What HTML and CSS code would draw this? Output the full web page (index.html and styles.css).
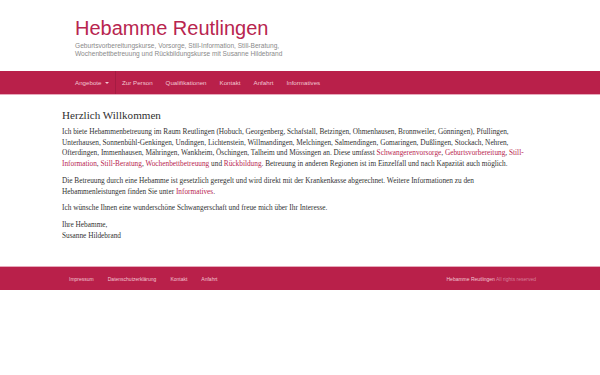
FILE: index.html
```html
<!DOCTYPE html>
<html lang="de">
<head>
<meta charset="utf-8">
<title>Hebamme Reutlingen</title>
<link rel="stylesheet" href="styles.css">
</head>
<body>
<header class="site-header">
  <div class="container header-inner">
    <h1 class="site-title">Hebamme Reutlingen</h1>
    <p class="site-desc">Geburtsvorbereitungskurse, Vorsorge, Still-Information, Still-Beratung,<br>Wochenbettbetreuung und Rückbildungskurse mit Susanne Hildebrand</p>
  </div>
</header>
<nav class="navbar">
  <div class="container nav-inner">
    <a class="nav-item dropdown" href="#">Angebote <span class="caret"></span></a>
    <a class="nav-item" href="#">Zur Person</a>
    <a class="nav-item" href="#">Qualifikationen</a>
    <a class="nav-item" href="#">Kontakt</a>
    <a class="nav-item" href="#">Anfahrt</a>
    <a class="nav-item" href="#">Informatives</a>
  </div>
</nav>
<main class="container content">
  <h2 class="page-title">Herzlich Willkommen</h2>
  <p>Ich biete Hebammenbetreuung im Raum Reutlingen (Hobuch, Georgenberg, Schafstall, Betzingen, Ohmenhausen, Bronnweiler, Gönningen), Pfullingen, Unterhausen, Sonnenbühl-Genkingen, Undingen, Lichtenstein, Willmandingen, Melchingen, Salmendingen, Gomaringen, Dußlingen, Stockach, Nehren, Ofterdingen, Immenhausen, Mähringen, Wankheim, Öschingen, Talheim und Mössingen an. Diese umfasst <a href="#">Schwangerenvorsorge</a>, <a href="#">Geburtsvorbereitung</a>, <a href="#">Still-Information</a>, <a href="#">Still-Beratung</a>, <a href="#">Wochenbettbetreuung</a> und <a href="#">Rückbildung</a>. Betreuung in anderen Regionen ist im Einzelfall und nach Kapazität auch möglich.</p>
  <p>Die Betreuung durch eine Hebamme ist gesetzlich geregelt und wird direkt mit der Krankenkasse abgerechnet. Weitere Informationen zu den Hebammenleistungen finden Sie unter <a href="#">Informatives</a>.</p>
  <p>Ich wünsche Ihnen eine wunderschöne Schwangerschaft und freue mich über Ihr Interesse.</p>
  <p>Ihre Hebamme,<br>Susanne Hildebrand</p>
</main>
<footer class="footer">
  <div class="container footer-inner">
    <div class="footer-links">
      <a href="#">Impressum</a>
      <a href="#">Datenschutzerklärung</a>
      <a href="#">Kontakt</a>
      <a href="#">Anfahrt</a>
    </div>
    <div class="copyright"><span class="brand">Hebamme Reutlingen</span> <span class="rights">All rights reserved</span></div>
  </div>
</footer>
</body>
</html>
```
FILE: styles.css
```css
html, body {
  margin: 0;
  padding: 0;
  background: #ffffff;
}
body {
  font-family: "Liberation Serif", "Times New Roman", serif;
  color: #333333;
}
.container {
  width: 476px;
  margin: 0 auto;
  box-sizing: border-box;
}
.site-header {
  padding: 16px 0 13px;
}
.header-inner {
  padding-left: 13px;
}
.site-title {
  margin: 0;
  font-family: "Liberation Sans", Arial, sans-serif;
  font-weight: normal;
  font-size: 20px;
  line-height: 24px;
  color: #b8254f;
}
.site-desc {
  margin: 2px 0 0;
  font-family: "Liberation Sans", Arial, sans-serif;
  font-size: 6.6px;
  line-height: 8px;
  color: #8a8a8a;
}
.navbar {
  background: #b9204a;
  border-bottom: 1px solid #e7a9bb;
}
.nav-inner {
  display: flex;
  align-items: stretch;
  height: 23px;
  padding-left: 13px;
}
.nav-item {
  display: flex;
  align-items: center;
  padding: 0 6.5px;
  font-family: "Liberation Sans", Arial, sans-serif;
  font-size: 6.2px;
  color: #f2c6d2;
  text-decoration: none;
}
.nav-item:first-child {
  padding-left: 0;
  padding-right: 6px;
  border-right: 1px solid #a51b42;
}
.caret {
  display: inline-block;
  width: 0;
  height: 0;
  margin-left: 3px;
  border-top: 2px solid #f2c6d2;
  border-left: 2px solid transparent;
  border-right: 2px solid transparent;
}
.content {
  padding: 14px 0 19px;
}
.page-title {
  margin: 0 0 5px;
  font-weight: normal;
  font-size: 11.1px;
  line-height: 13px;
  color: #2f2f2f;
}
.content p {
  margin: 0 0 6px;
  font-size: 7.3px;
  line-height: 10.7px;
  color: #333333;
}
.content a {
  color: #b8254f;
  text-decoration: none;
}
.footer {
  background: #b9204a;
  border-top: 1px solid #e7a9bb;
}
.footer-inner {
  display: flex;
  justify-content: space-between;
  align-items: center;
  height: 23px;
  padding: 0 2px 0 7px;
  font-family: "Liberation Sans", Arial, sans-serif;
  font-size: 5px;
}
.footer-links {
  display: flex;
  gap: 14px;
}
.footer-links a {
  color: #f2c6d2;
  text-decoration: none;
}
.brand {
  color: #f2c6d2;
}
.rights {
  color: #d77f98;
}
```
